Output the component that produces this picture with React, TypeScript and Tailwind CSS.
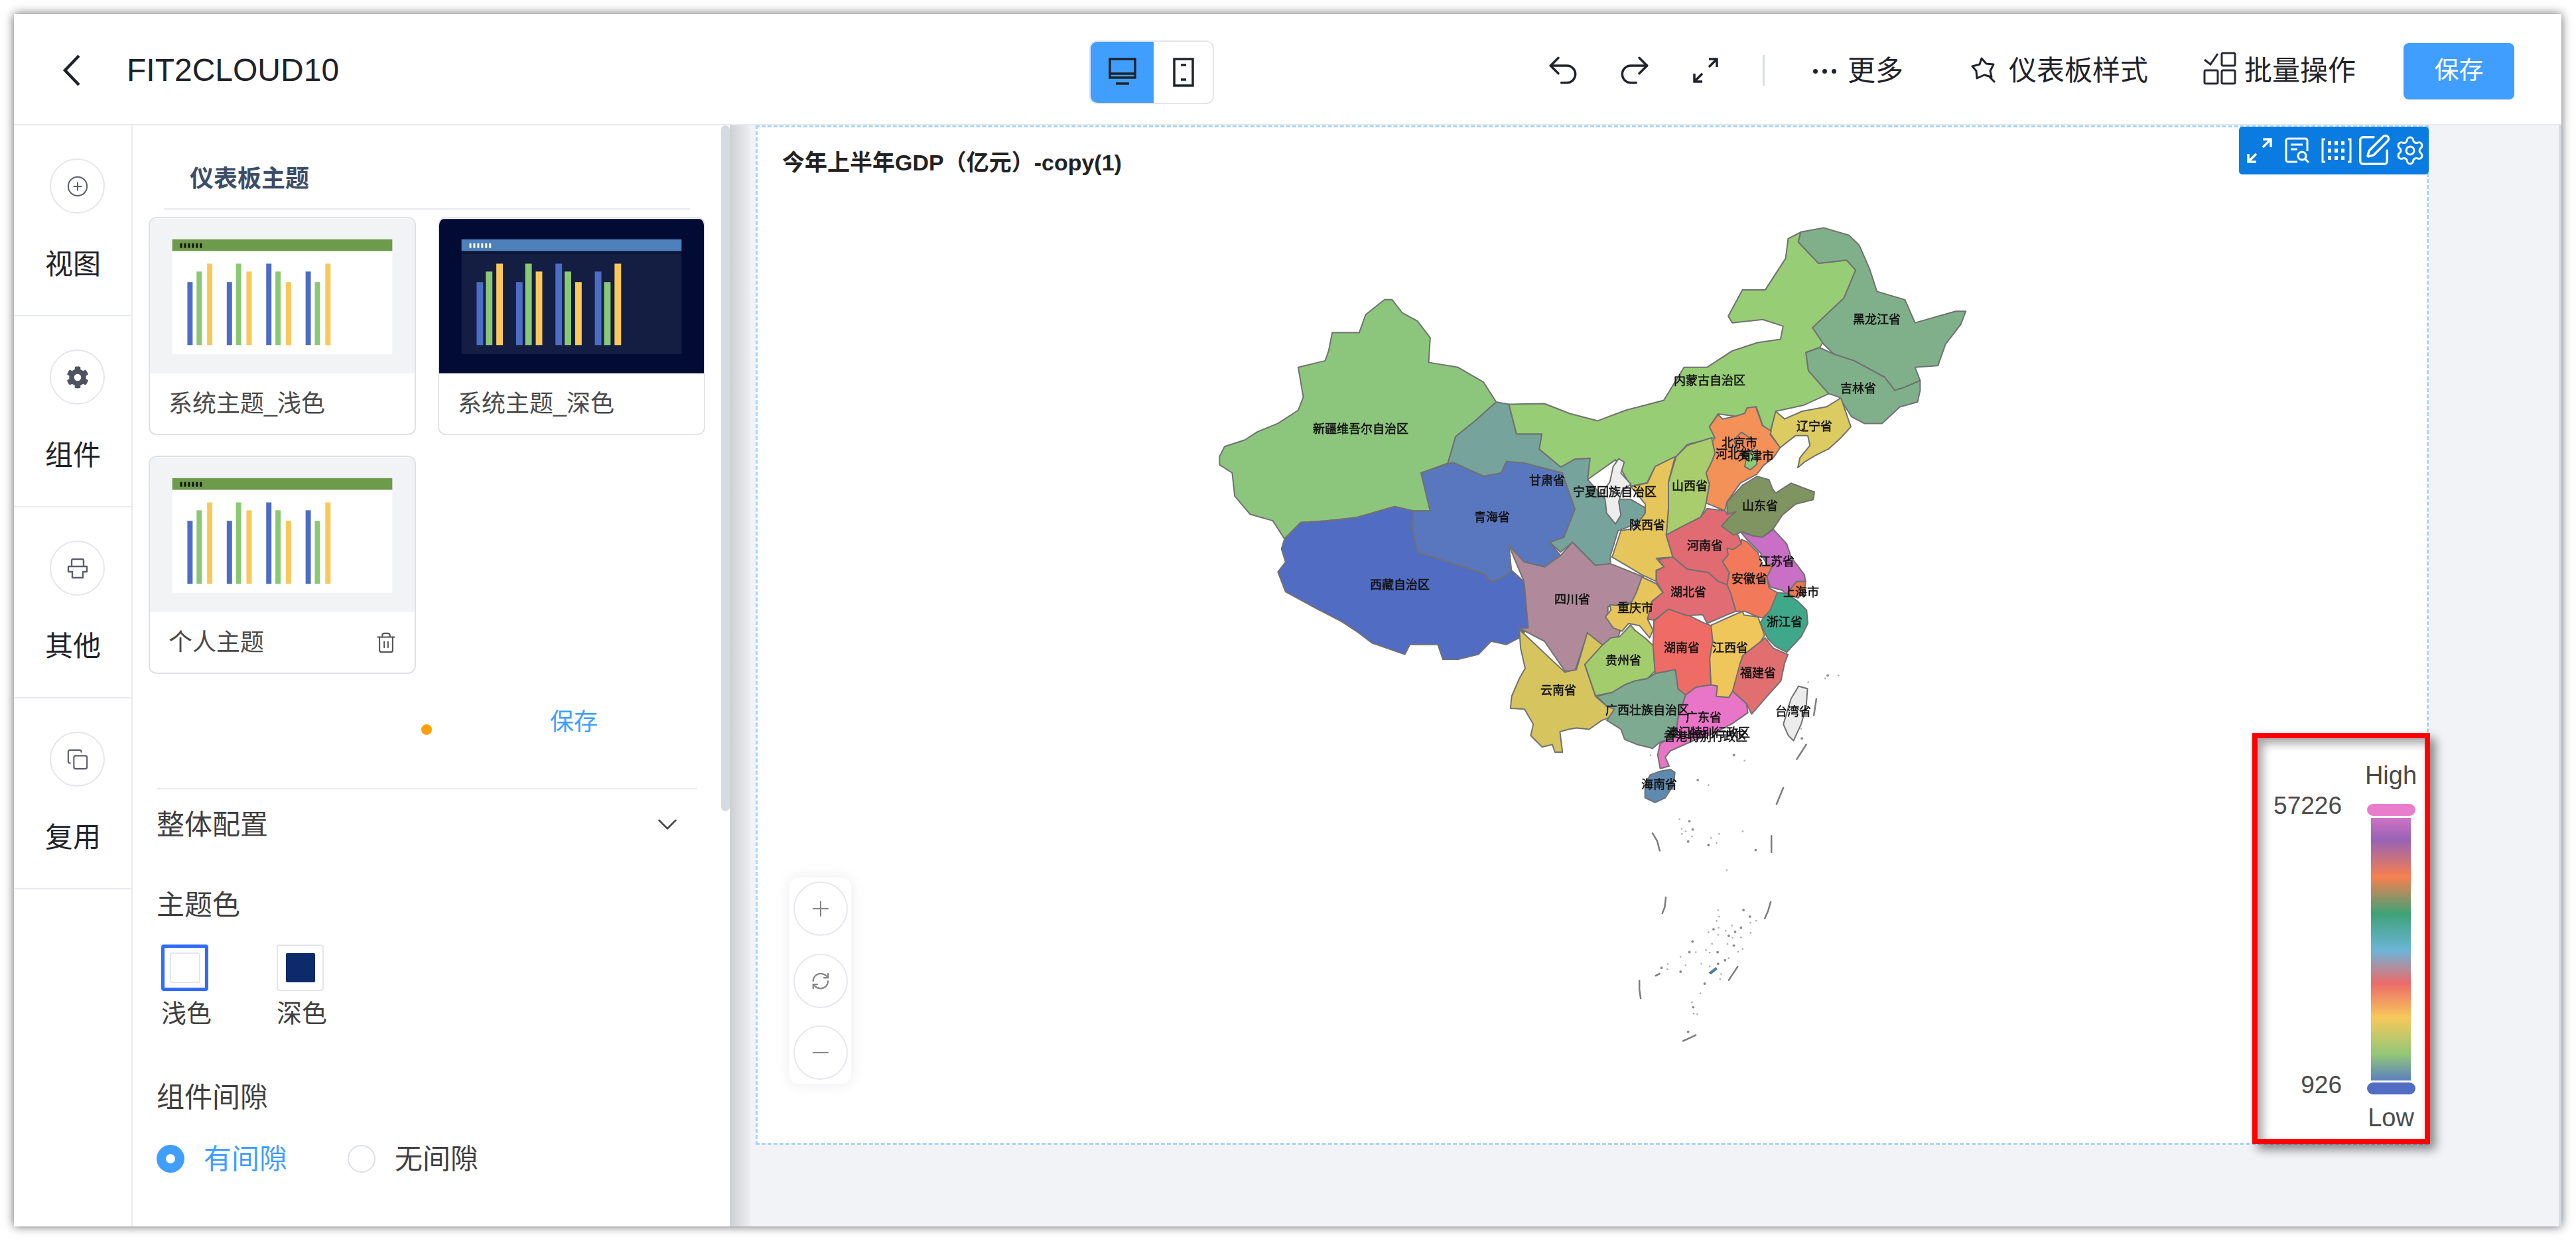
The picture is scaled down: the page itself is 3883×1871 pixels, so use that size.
import { ChevronDown, CirclePlus, Copy, Minus, Plus, RefreshCw, Redo2, Settings, SquarePen, Trash2, Undo2 } from 'lucide-react';
import { FaCog } from 'react-icons/fa';

// map outlines are traced in three different crop spaces, each with its own transform
const FRAMES: Record<string, string> = {
  a: 'translate(1800 320) scale(.7653 .4975)',
  b: 'translate(2400 600) scale(.3333)',
  c: 'translate(2250 1000) scale(.3827)',
};

const PROVINCES: { f: string; fill: string; pts: string }[] = [
  { f: 'a', fill: '#8cc67c', pts: '50,740 60,710 100,690 125,665 165,640 205,600 215,560 205,470 258,450 265,420 272,365 325,365 338,310 375,265 390,265 410,305 440,330 465,380 462,455 520,470 570,515 595,575 555,630 515,680 500,760 447,790 465,905 430,905 395,892 320,925 260,935 210,940 178,990 155,935 110,915 80,860 75,790 50,765' },
  { f: 'a', fill: '#76a39b', pts: '605,578 620,582 635,672 685,672 680,718 722,772 750,748 780,745 775,810 810,870 860,870 888,895 888,935 835,965 820,1040 820,1070 790,1070 745,1000 722,1030 700,1000 728,985 750,900 725,790 650,760 605,790 570,800 515,770 500,760 515,680 555,630 595,575' },
  { f: 'a', fill: '#5977bf', pts: '447,790 510,758 570,800 605,790 615,755 650,760 725,790 750,900 728,985 700,1000 722,1040 690,1075 650,1060 620,1010 625,1085 605,1110 585,1120 570,1095 500,1060 440,1030 430,960 432,905 465,905' },
  { f: 'a', fill: '#516cc3', pts: '178,990 210,940 260,935 320,925 395,892 432,905 430,960 440,1030 500,1060 570,1095 585,1120 605,1110 625,1085 650,1120 658,1260 640,1290 615,1310 585,1300 560,1340 520,1355 490,1355 480,1310 425,1310 415,1340 350,1305 320,1270 290,1240 240,1200 180,1150 165,1090 180,1060 172,1020' },
  { f: 'a', fill: '#b08a9a', pts: '620,1010 650,1060 690,1075 722,1040 745,1000 790,1070 820,1065 885,1105 870,1180 815,1195 815,1230 840,1265 830,1310 795,1320 775,1275 750,1390 730,1390 690,1300 640,1260 658,1260 650,1120' },
  { f: 'a', fill: '#97cd75', pts: '620,582 690,580 740,610 795,632 850,600 925,570 965,470 1010,470 1060,420 1110,395 1155,385 1160,345 1120,325 1060,335 1052,315 1080,235 1125,235 1165,140 1170,80 1195,60 1190,90 1230,155 1285,145 1303,175 1280,260 1218,350 1245,380 1232,410 1205,425 1210,480 1250,550 1200,585 1146,603 1134,669 1120,646 1107,589 1075,620 1032,611 1015,650 1026,683 971,704 950,740 908,771 892,820 860,830 830,750 775,810 780,745 750,748 722,772 680,718 685,672 635,672' },
  { f: 'a', fill: '#7fb08a', pts: '1195,60 1240,47 1290,70 1310,100 1330,170 1345,240 1400,265 1420,335 1500,300 1520,300 1510,340 1480,400 1465,465 1420,470 1430,510 1400,530 1380,540 1360,500 1300,450 1260,430 1240,400 1218,350 1280,260 1303,175 1285,145 1230,155 1190,90' },
  { f: 'a', fill: '#7fb08a', pts: '1205,425 1232,410 1260,430 1300,450 1360,500 1380,540 1400,530 1430,510 1430,540 1425,575 1390,590 1355,640 1320,640 1295,620 1270,560 1250,550 1210,480' },
  { f: 'c', fill: '#d6c45f', pts: '105,-133 284,35 330,25 373,-120 433,-72 363,5 405,130 450,170 480,180 470,210 430,225 380,260 330,255 300,260 265,270 275,350 245,350 235,320 195,330 150,285 160,240 125,180 70,178 75,130 105,60 128,20 110,-60' },
  { f: 'c', fill: '#a3cd6d', pts: '363,5 433,-72 465,-100 500,-105 543,-151 560,-130 600,-100 632,-70 640,30 610,60 560,70 520,85 470,115 405,128' },
  { f: 'c', fill: '#7faa92', pts: '410,130 470,115 520,85 560,70 610,60 640,40 720,25 730,100 760,125 730,215 720,290 660,310 630,335 570,320 520,300 505,260 450,225 480,180 450,170' },
  { f: 'c', fill: '#ef6b66', pts: '635,-165 692,-214 770,-190 836,-157 862,-148 867,-87 855,-20 860,85 800,95 760,125 730,100 720,25 640,40 632,-70' },
  { f: 'c', fill: '#eec65a', pts: '860,-150 950,-190 984,-204 990,-190 1045,-183 1071,-110 1055,-85 985,-30 975,0 950,110 930,135 880,130 885,90 860,85 855,-20 867,-87' },
  { f: 'c', fill: '#e16f70', pts: '1073,-100 1105,-60 1163,-34 1150,0 1135,70 1090,120 1020,200 1000,160 945,110 975,0 985,-30 1055,-85' },
  { f: 'c', fill: '#e875c8', pts: '730,215 760,125 800,95 860,85 885,90 880,130 930,135 945,110 1000,160 1005,195 940,240 860,280 790,305 700,345 680,370 695,405 660,415 650,360 660,315 720,290' },
  { f: 'c', fill: '#5f8ab0', pts: '600,480 620,440 660,425 700,418 718,430 712,480 680,530 640,548 600,530' },
  { f: 'c', fill: '#ececec', pts: '1145,240 1175,140 1205,90 1240,100 1235,170 1215,240 1185,305 1165,285' },
  { f: 'b', fill: '#dccb60', pts: '805,160 830,60 870,95 950,60 1060,40 1125,0 1170,130 1125,180 1070,230 1010,260 960,290 930,315 940,270 985,215 975,170 920,170 850,225' },
  { f: 'b', fill: '#f39159', pts: '530,130 570,75 590,95 640,85 690,70 700,45 740,40 770,125 810,150 805,165 850,225 820,270 775,305 745,345 670,385 610,470 600,510 515,475 530,390 515,340 540,290 555,250 530,215 555,180' },
  { f: 'b', fill: '#f08a55', pts: '640,190 675,155 720,185 735,225 700,250 660,240' },
  { f: 'b', fill: '#8ccb78', pts: '700,255 740,240 745,300 715,325 690,310' },
  { f: 'b', fill: '#a9cd6c', pts: '345,380 380,265 430,215 540,180 555,250 540,290 515,340 530,390 515,475 510,500 490,540 420,575 335,620 345,500' },
  { f: 'b', fill: '#e6c55a', pts: '250,385 285,310 375,265 345,380 345,500 335,620 365,720 290,725 325,765 290,780 290,830 225,800 150,755 90,720 130,600 190,590 240,520 240,480 175,400' },
  { f: 'b', fill: '#ededed', pts: '120,275 145,290 130,340 175,390 135,420 120,470 130,530 105,570 65,520 60,470 50,420 80,380 95,310' },
  { f: 'b', fill: '#e06b73', pts: '520,500 600,510 610,525 650,515 620,540 585,580 660,620 675,660 640,690 610,680 615,710 590,740 620,790 610,845 570,830 525,790 430,775 365,720 335,620 420,575 490,540' },
  { f: 'b', fill: '#7f9460', pts: '610,470 680,395 745,355 800,370 815,410 830,430 900,385 950,405 1005,425 1000,460 920,480 860,530 820,590 770,630 730,625 680,605 640,620 585,580 620,540 650,515 610,525' },
  { f: 'b', fill: '#c96fc6', pts: '670,605 730,625 770,630 820,595 880,660 900,720 960,800 965,830 925,830 880,890 860,870 805,855 790,810 800,770 760,700 700,640' },
  { f: 'b', fill: '#f27a5b', pts: '675,640 700,650 750,700 770,760 820,750 790,810 800,860 838,880 810,960 770,995 750,990 690,965 650,965 625,880 610,845 620,790 590,740 615,710 610,680 640,685 675,660' },
  { f: 'b', fill: '#e16c74', pts: '300,730 365,720 430,775 525,790 570,830 610,845 625,880 650,965 600,985 520,1020 500,980 430,985 345,955 280,1005 250,1000 270,920 320,880 290,830 290,780 325,765' },
  { f: 'b', fill: '#3fa88a', pts: '805,960 838,880 880,885 930,920 970,960 975,1020 945,1080 880,1150 830,1125 795,1090 760,1015' },
  { f: 'b', fill: '#e8784e', pts: '925,830 965,830 960,880 930,905 880,885' },
  { f: 'b', fill: '#e6c55a', pts: '225,810 290,840 320,880 270,920 250,1000 275,1050 260,1085 215,1030 165,1020 135,1055 95,1040 60,990 85,960 80,935 130,940 175,930 200,880' },
];

const DASHES = [
  '1275,140 1265,205', '1235,320 1198,378', '1145,490 1118,555', '1098,680 1098,745',
  '1095,940 1085,975 1072,1005', '965,1195 930,1248', '630,670 648,700 658,738',
  '682,922 678,960 668,985', '578,1250 578,1285 583,1320', '800,1465 750,1488',
];

const ISLANDS = [
  [950, 362], [992, 384], [622, 362], [808, 460], [850, 480], [736, 614], [775, 622], [745, 652], [760, 662], [788, 655], [745, 672], [785, 682], [770, 702],
  [860, 688], [892, 672], [850, 716], [882, 708], [985, 662], [1036, 736], [922, 815], [888, 972], [988, 972], [892, 998], [882, 1015], [1013, 998], [1015, 1022],
  [1038, 1014], [978, 1042], [942, 1034], [850, 1060], [870, 1048], [890, 1042], [918, 1054], [955, 1058], [1016, 1062], [888, 1070], [930, 1074], [945, 1082], [978, 1080],
  [787, 1096], [864, 1105], [925, 1106], [950, 1112], [840, 1130], [855, 1140], [886, 1138], [966, 1136], [985, 1126], [775, 1138], [800, 1138], [740, 1156], [915, 1170],
  [930, 1162], [690, 1185], [665, 1200], [688, 1205], [760, 1190], [740, 1215], [822, 1184], [855, 1194], [888, 1184], [900, 1224], [896, 1244], [835, 1262], [818, 1300],
  [785, 1335], [790, 1355], [792, 1380], [806, 1382], [770, 1452], [1243, 75], [1310, 60], [1320, 48], [1362, 48], [1215, 258], [1218, 296],
];

const LABELS: [string, number, number][] = [
  ['新疆维吾尔自治区', 2051, 647], ['内蒙古自治区', 2577, 574], ['黑龙江省', 2829, 482], ['吉林省', 2801, 586], ['辽宁省', 2735, 643],
  ['北京市', 2622, 668], ['河北省', 2613, 685], ['天津市', 2647, 688], ['甘肃省', 2332, 725], ['宁夏回族自治区', 2434, 742],
  ['山西省', 2547, 733], ['山东省', 2653, 763], ['陕西省', 2483, 792], ['青海省', 2249, 780], ['河南省', 2570, 823],
  ['江苏省', 2678, 847], ['安徽省', 2637, 873], ['上海市', 2715, 893], ['湖北省', 2545, 893], ['四川省', 2370, 904],
  ['西藏自治区', 2110, 882], ['重庆市', 2465, 917], ['浙江省', 2690, 938], ['湖南省', 2535, 977], ['江西省', 2608, 977],
  ['贵州省', 2447, 996], ['福建省', 2650, 1015], ['云南省', 2349, 1041], ['广西壮族自治区', 2483, 1071], ['台湾省', 2703, 1073],
  ['广东省', 2568, 1082], ['澳门特别行政区', 2575, 1105], ['香港特别行政区', 2571, 1111], ['海南省', 2501, 1183],
];

const CHINA_MAP = () => (
  <svg viewBox="1139 189 2521 1536" className="absolute left-[-3px] top-[-3px] h-[1536px] w-[2521px] blur-[0.6px]">
    {PROVINCES.map((p, i) => (
      <polygon key={i} transform={FRAMES[p.f]} points={p.pts} fill={p.fill} stroke="#717171" strokeWidth={2} strokeLinejoin="round" vectorEffect="non-scaling-stroke" />
    ))}
    <g transform={FRAMES.c}>
      {DASHES.map((d) => (
        <polyline key={d} points={d} fill="none" stroke="#7c7c7c" strokeWidth={2.5} strokeLinecap="round" vectorEffect="non-scaling-stroke" />
      ))}
      {ISLANDS.map(([x, y], i) => (
        <circle key={i} cx={x} cy={y} r={i % 3 === 0 ? 5 : 3.5} fill={i % 3 === 0 ? '#8a8a8a' : '#b0b0b0'} />
      ))}
      <polygon points="850,1218 880,1196 885,1206 860,1226" fill="#4f7fa5" />
      <polyline points="640,1232 660,1222" fill="none" stroke="#777" strokeWidth={2.5} vectorEffect="non-scaling-stroke" />
    </g>
    {LABELS.map(([t, x, y]) => (
      <text key={t} x={x} y={y} fontSize={18} fill="#111" stroke="#111" strokeWidth={0.5} textAnchor="middle" dominantBaseline="central">
        {t}
      </text>
    ))}
  </svg>
);

const BARS = [[96, 112, 124], [96, 124, 112], [124, 112, 96], [112, 96, 124]];
const BAR_COLORS = ['#4d6cc5', '#8bc874', '#fac858'];

const ThemeThumb = ({ dark }: { dark?: boolean }) => (
  <svg viewBox="0 0 403 235" className="block h-[235px] w-full">
    <rect width="403" height="235" fill={dark ? '#020b33' : '#f2f3f5'} />
    <rect x="34" y="53" width="335" height="153" fill={dark ? '#131e42' : '#ffffff'} />
    <rect x="34" y="31" width="335" height="18" fill={dark ? '#4e80bb' : '#6e9a4b'} />
    <rect x="34" y="49" width="335" height="4" fill={dark ? '#0d1538' : '#ffffff'} />
    {[0, 1, 2, 3, 4, 5].map((i) => (
      <rect key={i} x={46 + i * 6} y={37} width={3} height={7} fill={dark ? '#ffffff' : '#111111'} />
    ))}
    {BARS.map((group, g) =>
      group.map((h, b) => (
        <rect key={`${g}-${b}`} x={57 + g * 60 + [0, 14, 30][b]} y={192 - h} width={dark ? 10 : 8} height={h} fill={BAR_COLORS[b]} />
      )),
    )}
  </svg>
);

const ThemeCard = ({ name, dark, canDelete }: { name: string; dark?: boolean; canDelete?: boolean }) => (
  <div className={`h-[329px] overflow-hidden rounded-[12px] border-2 bg-white ${dark ? 'border-[#e3e5ea]' : 'border-[#dfe1e6]'}`}>
    <ThemeThumb dark={dark} />
    <div className="flex h-[90px] items-center justify-between pl-[28px] pr-[26px] text-[36px] leading-[50px] text-[#4a4a4a]">
      <span>{name}</span>
      {canDelete && <Trash2 size={34} strokeWidth={1.5} className="text-[#555555]" />}
    </div>
  </div>
);

const RailItem = ({ label, children }: { label: string; children: React.ReactNode }) => (
  <div className="flex h-[288px] flex-col border-b-2 border-[#e8eaee] pt-[50px]">
    <div className="ml-[54px] flex h-[83px] w-[83px] items-center justify-center rounded-full border-2 border-[#e4e6ec]">{children}</div>
    <div className="mt-[47px] pl-[47px] text-[42px] leading-[60px] text-[#1f2329]">{label}</div>
  </div>
);

const ZoomButton = ({ children }: { children: React.ReactNode }) => (
  <div className="flex h-[82px] w-[82px] items-center justify-center rounded-full border-2 border-[#e6e8ee] text-[#858585]">{children}</div>
);

const App = () => {
  return (
    <div className="h-[1871px] w-[3883px] overflow-hidden bg-white pl-[21px] pt-[21px] [font-family:'Liberation_Sans','Noto_Sans_CJK_SC',sans-serif]">
      <div className="flex h-[1828px] w-[3840px] flex-col bg-white shadow-[0_0_14px_rgba(0,0,0,0.6)]">
        {/* top bar */}
        <div className="flex h-[168px] shrink-0 items-center border-b-2 border-[#e8eaee] pt-[4px] text-[#1f2329]">
          <svg width="30" height="50" viewBox="0 0 30 50" className="ml-[72px] shrink-0">
            <polyline points="26,3 5,25 26,47" fill="none" stroke="#1f2329" strokeWidth="4.5" />
          </svg>
          <div className="ml-[68px] w-[1451px] text-[48px] leading-[60px]">FIT2CLOUD10</div>
          <div className="mt-[6px] flex h-[96px] w-[188px] shrink-0 overflow-hidden rounded-[12px] border-2 border-[#e3e5ea]">
            <div className="flex w-[95px] items-center justify-center bg-[#409eff]">
              <svg width="44" height="44" viewBox="0 0 44 44" fill="none" stroke="#1f2329" strokeWidth="3.5">
                <rect x="3" y="2" width="38" height="28" />
                <path d="M3 24h38M12 39h20" />
              </svg>
            </div>
            <div className="flex flex-1 items-center justify-center">
              <svg width="34" height="44" viewBox="0 0 34 44" fill="none" stroke="#1f2329" strokeWidth="3.5">
                <rect x="3" y="2" width="28" height="40" />
                <path d="M13 11h8M13 33h8" />
              </svg>
            </div>
          </div>
          <Undo2 size={56} strokeWidth={1.5} className="ml-[498px] shrink-0" />
          <Redo2 size={56} strokeWidth={1.5} className="ml-[52px] shrink-0" />
          <svg width="38" height="38" viewBox="0 0 38 38" fill="none" stroke="#1f2329" strokeWidth="3.5" className="ml-[60px] shrink-0">
            <path d="M24 2h12v12M36 2L24 14M14 36H2V24M2 36l12-12" />
          </svg>
          <div className="ml-[67px] h-[47px] w-[3px] shrink-0 bg-[#d9dde5]" />
          <div className="mt-[2px] ml-[73px] flex w-[35px] shrink-0 justify-between">
            <span className="h-[7px] w-[7px] rounded-full bg-[#1f2329]" />
            <span className="h-[7px] w-[7px] rounded-full bg-[#1f2329]" />
            <span className="h-[7px] w-[7px] rounded-full bg-[#1f2329]" />
          </div>
          <div className="mt-[2px] ml-[17px] w-[84px] shrink-0 text-[42px] leading-[60px]">更多</div>
          <svg width="40" height="40" viewBox="0 0 40 40" fill="none" stroke="#1f2329" strokeWidth="3" strokeLinejoin="round" className="ml-[102px] shrink-0">
            <path d="M16 2l7 8 11 1-5 10 2 9-11-3-11 5-1-11L2 14l11-3z" />
            <path d="M28 30l8 8" />
          </svg>
          <div className="mt-[2px] ml-[17px] w-[210px] shrink-0 text-[42px] leading-[60px]">仪表板样式</div>
          <svg width="50" height="50" viewBox="0 0 50 50" fill="none" stroke="#2a2a35" strokeWidth="3" className="ml-[83px] mt-[-6px] shrink-0">
            <path d="M2 12l9 7L22 3" />
            <rect x="28" y="2" width="20" height="19" rx="2" />
            <rect x="2" y="28" width="20" height="20" rx="2" />
            <rect x="28" y="28" width="20" height="20" rx="2" />
          </svg>
          <div className="mt-[2px] ml-[12px] w-[168px] shrink-0 text-[42px] leading-[60px]">批量操作</div>
          <div className="mt-[2px] ml-[72px] flex h-[85px] w-[167px] shrink-0 items-center justify-center rounded-[8px] bg-[#409eff] text-[37px] text-white">保存</div>
        </div>

        <div className="flex min-h-0 flex-1">
          {/* left rail */}
          <div className="w-[179px] shrink-0 border-r-2 border-[#e8eaee]">
            <RailItem label="视图">
              <CirclePlus size={34} strokeWidth={1.4} className="text-[#5b5f6b]" />
            </RailItem>
            <RailItem label="组件">
              <FaCog size={34} className="text-[#4d5360]" />
            </RailItem>
            <RailItem label="其他">
              <svg width="34" height="34" viewBox="0 0 34 34" fill="none" stroke="#5b5f6b" strokeWidth="2.4" strokeLinejoin="round">
                <path d="M8 14V5a2 2 0 0 1 2-2h14a2 2 0 0 1 2 2v9" />
                <path d="M3 14h28v8h-6v9H9v-9H3z" />
              </svg>
            </RailItem>
            <RailItem label="复用">
              <Copy size={34} strokeWidth={1.5} className="text-[#5b5f6b]" />
            </RailItem>
          </div>

          {/* theme panel */}
          <div className="relative w-[900px] shrink-0 overflow-hidden bg-white">
            <div className="absolute right-0 top-0 h-[1034px] w-[13px] rounded-full bg-[#d5dae5]" />
            <div className="pl-[86px] pt-[56px] text-[36px] font-bold leading-[50px] text-[#3d4d66]">仪表板主题</div>
            <div className="ml-[47px] mt-[19px] h-[2px] w-[793px] bg-[#e8eaee]" />
            <div className="ml-[24px] mt-[11px] grid grid-cols-[403px_403px] gap-x-[33px] gap-y-[31px]">
              <ThemeCard name="系统主题_浅色" />
              <ThemeCard name="系统主题_深色" dark />
              <ThemeCard name="个人主题" canDelete />
            </div>
            <div className="mt-[44px] flex h-[70px] items-start">
              <span className="ml-[435px] mt-[32px] h-[16px] w-[16px] rounded-full bg-[#ff9f0a]" />
              <span className="ml-[178px] mt-[4px] text-[36px] leading-[50px] text-[#409eff]">保存</span>
            </div>
            <div className="ml-[36px] mt-[58px] h-[2px] w-[815px] bg-[#e8eaf0]" />
            <div className="ml-[36px] mt-[23px] flex h-[60px] w-[795px] items-center justify-between text-[42px] text-[#3f3f3f]">
              <span>整体配置</span>
              <ChevronDown size={50} strokeWidth={1.2} className="text-[#444444]" />
            </div>
            <div className="ml-[36px] mt-[62px] text-[42px] leading-[60px] text-[#3f3f3f]">主题色</div>
            <div className="ml-[43px] mt-[29px] flex gap-[103px]">
              <div className="flex h-[70px] w-[71px] items-center justify-center rounded-[4px] border-[5px] border-[#2f6bff]">
                <div className="h-[46px] w-[46px] rounded-[3px] border-2 border-[#e3e5ea] bg-white" />
              </div>
              <div className="flex h-[70px] w-[71px] items-center justify-center rounded-[4px] border-2 border-[#e3e5ea]">
                <div className="h-[44px] w-[44px] rounded-[2px] bg-[#0d2a6b]" />
              </div>
            </div>
            <div className="ml-[43px] mt-[4px] flex gap-[98px] text-[38px] leading-[60px] text-[#3f3f3f]">
              <span>浅色</span>
              <span>深色</span>
            </div>
            <div className="ml-[36px] mt-[67px] text-[42px] leading-[60px] text-[#3f3f3f]">组件间隙</div>
            <div className="ml-[36px] mt-[32px] flex h-[60px] items-center text-[42px]">
              <span className="flex h-[42px] w-[42px] items-center justify-center rounded-full bg-[#409eff]">
                <span className="h-[14px] w-[14px] rounded-full bg-white" />
              </span>
              <span className="ml-[29px] text-[#409eff]">有间隙</span>
              <span className="ml-[91px] h-[42px] w-[42px] rounded-full border-2 border-[#dcdfe6]" />
              <span className="ml-[29px] text-[#3f3f3f]">无间隙</span>
            </div>
          </div>
          <div className="w-[30px] shrink-0 bg-gradient-to-r from-[#cdcfd3] to-[#eceef1]" />

          {/* canvas */}
          <div className="relative flex-1 bg-[#f1f3f6] pl-[9px]">
            <div className="relative h-[1537px] w-[2522px] border-[3px] border-dashed border-[#a8d4fb] bg-white">
              <div className="pl-[37px] pt-[30px] text-[34px] font-bold leading-[46px] text-[#222222]">今年上半年GDP（亿元）-copy(1)</div>
              <CHINA_MAP />
              <div className="absolute right-[-3px] top-[-1px] flex h-[72px] w-[286px] items-center rounded-[5px] bg-[#0a7be0] pl-[12px] text-white">
                <svg width="38" height="38" viewBox="0 0 38 38" fill="none" stroke="currentColor" strokeWidth="3.5">
                  <path d="M24 2h12v12M36 2L24 14M14 36H2V24M2 36l12-12" />
                </svg>
                <svg width="40" height="40" viewBox="0 0 40 40" fill="none" stroke="currentColor" strokeWidth="3" className="ml-[18px]">
                  <path d="M20 37H6a3 3 0 0 1-3-3V5a3 3 0 0 1 3-3h26a3 3 0 0 1 3 3v16" />
                  <path d="M10 11h18M10 18h10" />
                  <circle cx="27" cy="28" r="6" />
                  <path d="M32 33l5 5" />
                </svg>
                <svg width="46" height="40" viewBox="0 0 46 40" fill="none" stroke="currentColor" strokeWidth="3" className="ml-[16px]">
                  <path d="M6 3H2v34h4M40 3h4v34h-4" />
                  <path d="M10 9h26M10 20h26M10 31h26" strokeWidth="6" strokeDasharray="5 5" />
                </svg>
                <SquarePen size={54} strokeWidth={1.5} className="ml-[6px]" />
                <Settings size={48} strokeWidth={1.5} className="ml-[4px]" />
              </div>
              <div className="absolute left-[48px] top-[1131px] flex h-[311px] w-[93px] flex-col items-center justify-between rounded-[14px] bg-white py-[6px] shadow-[0_0_24px_rgba(0,0,0,0.08)]">
                <ZoomButton>
                  <Plus size={38} strokeWidth={1.3} />
                </ZoomButton>
                <ZoomButton>
                  <RefreshCw size={30} strokeWidth={1.8} />
                </ZoomButton>
                <ZoomButton>
                  <Minus size={38} strokeWidth={1.3} />
                </ZoomButton>
              </div>
            </div>

            {/* visual map legend */}
            <div className="absolute left-[2265px] top-[916px] flex h-[620px] w-[268px] justify-end gap-[34px] border-[8px] border-[#ff0000] bg-white pr-[11px] text-[#4a4a4a] shadow-[8px_8px_14px_rgba(0,0,0,0.45),inset_8px_8px_14px_rgba(0,0,0,0.35)]">
              <div className="flex h-[545px] flex-col items-end justify-between pt-[80px] text-[37px] leading-[44px]">
                <span>57226</span>
                <span>926</span>
              </div>
              <div className="flex w-[80px] flex-col items-center pt-[34px] text-[38px] leading-[44px]">
                <span>High</span>
                <div className="mt-[21px] h-[18px] w-[73px] rounded-full bg-[#ea7ccc]" />
                <div className="mt-[3px] h-[396px] w-[60px] bg-[linear-gradient(to_bottom,#cf72c4_0%,#9763b5_8.5%,#f7804f_22.5%,#3fa277_36.5%,#6cb5d8_50.5%,#ec6a6a_63%,#f7c85a_76%,#93c777_90%,#5a80bf_100%)]" />
                <div className="mt-[3px] h-[18px] w-[73px] rounded-full bg-[#516cc3]" />
                <span className="mt-[13px]">Low</span>
              </div>
            </div>
            <div className="absolute right-0 top-0 h-full w-[4px] bg-[#d6dbe6]" />
          </div>
        </div>
      </div>
    </div>
  );
};

export default App;
